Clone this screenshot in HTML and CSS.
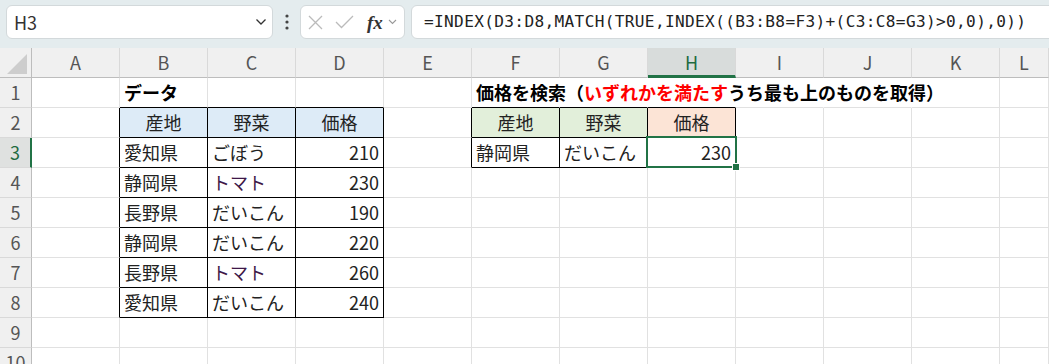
FILE: index.html
```html
<!DOCTYPE html>
<html lang="ja">
<head>
  <meta charset="UTF-8">
  <title>INDEX MATCH OR</title>
  <link rel="stylesheet" href="styles.css">
</head>
<body>
  <div class="topbar">
    <div class="namebox">
      <span>H3</span>
      <svg class="chev" width="12" height="8" viewBox="0 0 12 8"><path d="M1.5 1.5 L6 6 L10.5 1.5" fill="none" stroke="#333" stroke-width="1.3"/></svg>
    </div>
    <div class="grip">
      <svg width="4" height="16" viewBox="0 0 4 16"><circle cx="2" cy="2" r="1.6" fill="#444"/><circle cx="2" cy="8" r="1.6" fill="#444"/><circle cx="2" cy="14" r="1.6" fill="#444"/></svg>
    </div>
    <div class="fxbox">
      <svg class="ico-x" width="15" height="15" viewBox="0 0 15 15"><path d="M1 1 L14 14 M14 1 L1 14" stroke="#bbb" stroke-width="1.3" fill="none"/></svg>
      <svg class="ico-ok" width="19" height="14" viewBox="0 0 19 14"><path d="M1 7 L6.5 12.5 L18 1" stroke="#bbb" stroke-width="1.3" fill="none"/></svg>
      <span class="fx">fx</span>
      <svg class="chev-sm" width="9" height="6" viewBox="0 0 9 6"><path d="M1 1 L4.5 4.5 L8 1" fill="none" stroke="#999" stroke-width="1.1"/></svg>
    </div>
    <div class="formula">=INDEX(D3:D8,MATCH(TRUE,INDEX((B3:B8=F3)+(C3:C8=G3)&gt;0,0),0))</div>
  </div>

  <div class="sheet">
    <div class="row head">
      <div class="corner"><svg width="22" height="22" viewBox="0 0 22 22"><path d="M21 1 L21 21 L1 21 Z" fill="#cdcdcd"/></svg></div>
      <div class="ch">A</div><div class="ch">B</div><div class="ch">C</div><div class="ch">D</div>
      <div class="ch">E</div><div class="ch">F</div><div class="ch">G</div><div class="ch on">H</div>
      <div class="ch">I</div><div class="ch">J</div><div class="ch">K</div><div class="ch">L</div>
    </div>

    <div class="row">
      <div class="rh">1</div>
      <div class="c"></div>
      <div class="c bb title">データ</div><div class="c bb"></div><div class="c bb"></div>
      <div class="c"></div>
      <div class="c bb spill title">価格を検索（<span class="red">いずれかを満たす</span>うち最も上のものを取得）</div>
      <div class="c bb spill"></div><div class="c bb spill"></div><div class="c spill"></div><div class="c spill"></div>
      <div class="c"></div><div class="c"></div>
    </div>

    <div class="row">
      <div class="rh">2</div>
      <div class="c br"></div>
      <div class="c br bb ctr blue">産地</div><div class="c br bb ctr blue">野菜</div><div class="c br bb ctr blue">価格</div>
      <div class="c br"></div>
      <div class="c br bb ctr green">産地</div><div class="c br bb ctr green">野菜</div><div class="c br bb ctr orange">価格</div>
      <div class="c"></div><div class="c"></div><div class="c"></div><div class="c"></div>
    </div>

    <div class="row">
      <div class="rh on">3</div>
      <div class="c br"></div>
      <div class="c br bb">愛知県</div><div class="c br bb">ごぼう</div><div class="c br bb num">210</div>
      <div class="c br"></div>
      <div class="c br bb">静岡県</div><div class="c br bb">だいこん</div><div class="c br bb num">230</div>
      <div class="c"></div><div class="c"></div><div class="c"></div><div class="c"></div>
    </div>

    <div class="row">
      <div class="rh">4</div>
      <div class="c br"></div>
      <div class="c br bb">静岡県</div><div class="c br bb kata">トマト</div><div class="c br bb num">230</div>
      <div class="c"></div><div class="c"></div><div class="c"></div><div class="c"></div>
      <div class="c"></div><div class="c"></div><div class="c"></div><div class="c"></div>
    </div>

    <div class="row">
      <div class="rh">5</div>
      <div class="c br"></div>
      <div class="c br bb">長野県</div><div class="c br bb">だいこん</div><div class="c br bb num">190</div>
      <div class="c"></div><div class="c"></div><div class="c"></div><div class="c"></div>
      <div class="c"></div><div class="c"></div><div class="c"></div><div class="c"></div>
    </div>

    <div class="row">
      <div class="rh">6</div>
      <div class="c br"></div>
      <div class="c br bb">静岡県</div><div class="c br bb">だいこん</div><div class="c br bb num">220</div>
      <div class="c"></div><div class="c"></div><div class="c"></div><div class="c"></div>
      <div class="c"></div><div class="c"></div><div class="c"></div><div class="c"></div>
    </div>

    <div class="row">
      <div class="rh">7</div>
      <div class="c br"></div>
      <div class="c br bb">長野県</div><div class="c br bb kata">トマト</div><div class="c br bb num">260</div>
      <div class="c"></div><div class="c"></div><div class="c"></div><div class="c"></div>
      <div class="c"></div><div class="c"></div><div class="c"></div><div class="c"></div>
    </div>

    <div class="row">
      <div class="rh">8</div>
      <div class="c br"></div>
      <div class="c br bb">愛知県</div><div class="c br bb">だいこん</div><div class="c br bb num">240</div>
      <div class="c"></div><div class="c"></div><div class="c"></div><div class="c"></div>
      <div class="c"></div><div class="c"></div><div class="c"></div><div class="c"></div>
    </div>

    <div class="row">
      <div class="rh">9</div>
      <div class="c"></div><div class="c"></div><div class="c"></div><div class="c"></div>
      <div class="c"></div><div class="c"></div><div class="c"></div><div class="c"></div>
      <div class="c"></div><div class="c"></div><div class="c"></div><div class="c"></div>
    </div>

    <div class="row">
      <div class="rh">10</div>
      <div class="c"></div><div class="c"></div><div class="c"></div><div class="c"></div>
      <div class="c"></div><div class="c"></div><div class="c"></div><div class="c"></div>
      <div class="c"></div><div class="c"></div><div class="c"></div><div class="c"></div>
    </div>

    <!-- active cell H3 -->
    <div class="sel"><span class="handle"></span></div>
  </div>
</body>
</html>
```

FILE: styles.css
```css
html, body {
  margin: 0;
  height: 100%;
  overflow: hidden;
}

body {
  background: #fff;
  color: #222;
  font-family: "Noto Sans CJK JP", "Noto Sans", sans-serif;
}

/* formula bar */
.topbar {
  height: 48px;
  box-sizing: border-box;
  padding-top: 5px;
  background: #e4ecee;
  display: flex;
  align-items: flex-start;
}

.namebox {
  margin-left: 6px;
  width: 267px;
  height: 34px;
  box-sizing: border-box;
  background: #fff;
  border: 1px solid #d3d9db;
  border-radius: 6px;
  display: flex;
  align-items: center;
  justify-content: space-between;
  padding: 0 5px 0 7px;
  font-size: 18px;
  color: #333;
}

.namebox span {
  line-height: 1;
}

.grip {
  width: 27px;
  height: 34px;
  display: flex;
  align-items: center;
  justify-content: center;
}

.fxbox {
  width: 105px;
  height: 34px;
  box-sizing: border-box;
  background: #fff;
  border: 1px solid #d3d9db;
  border-radius: 6px;
  display: flex;
  align-items: center;
  padding-left: 7px;
}

.ico-x {
  margin-right: 12px;
}

.ico-ok {
  margin-right: 13px;
}

.fx {
  font-family: "Liberation Serif", serif;
  font-style: italic;
  font-weight: bold;
  font-size: 19px;
  color: #333;
  margin-right: 5px;
  line-height: 1;
}

.formula {
  flex: 1;
  margin-left: 6px;
  margin-right: -12px;
  height: 34px;
  box-sizing: border-box;
  background: #fff;
  border: 1px solid #d3d9db;
  border-radius: 6px;
  padding-left: 12px;
  font-family: "DejaVu Sans Mono", "Liberation Mono", monospace;
  font-size: 16.1px;
  letter-spacing: 0.35px;
  line-height: 32px;
  color: #222;
  white-space: nowrap;
}

/* grid */
.sheet {
  position: relative;
}

.row {
  display: grid;
  grid-template-columns: 32px repeat(11, 88px) 1fr;
  height: 30px;
}

.row > div {
  box-sizing: border-box;
  height: 30px;
  line-height: 29px;
  white-space: nowrap;
}

.corner,
.ch,
.rh {
  background: #f0f0f0;
  color: #555;
  font-size: 18px;
  text-align: center;
}

.corner {
  border-right: 1px solid #bdbdbd;
  border-bottom: 1px solid #bdbdbd;
  position: relative;
}

.corner svg {
  position: absolute;
  left: 6px;
  top: 5px;
}

.ch {
  border-right: 1px solid #d9d9d9;
  border-bottom: 1px solid #bdbdbd;
}

.ch.on {
  background: #d8dcdb;
  color: #1e6b41;
  border-bottom: 3px solid #217346;
}

.rh {
  border-right: 1px solid #bdbdbd;
  border-bottom: 1px solid #d9d9d9;
}

.rh.on {
  background: #dfe1e0;
  color: #1e6b41;
  border-right: 2px solid #217346;
}

.c {
  border-right: 1px solid #e1e1e1;
  border-bottom: 1px solid #e1e1e1;
  padding: 0 4px;
  font-size: 18px;
  color: #222;
}

.c.br {
  border-right-color: #000;
}

.c.bb {
  border-bottom-color: #000;
}

.c.spill {
  border-right-color: transparent;
  overflow: visible;
}

.title {
  font-weight: bold;
  color: #000;
}

.red {
  color: #f00;
}

.ctr {
  text-align: center;
}

.num {
  text-align: right;
}

.kata {
  color: #3d1748;
}

.blue {
  background: #ddebf7;
}

.green {
  background: #e2efda;
}

.orange {
  background: #fce4d6;
}

/* active cell */
.sel {
  position: absolute;
  left: 646px;
  top: 88px;
  width: 91px;
  height: 32px;
  box-sizing: border-box;
  border: 2px solid #217346;
}

.handle {
  position: absolute;
  right: -5px;
  bottom: -5px;
  width: 6px;
  height: 6px;
  background: #217346;
  border: 1px solid #fff;
}
```
